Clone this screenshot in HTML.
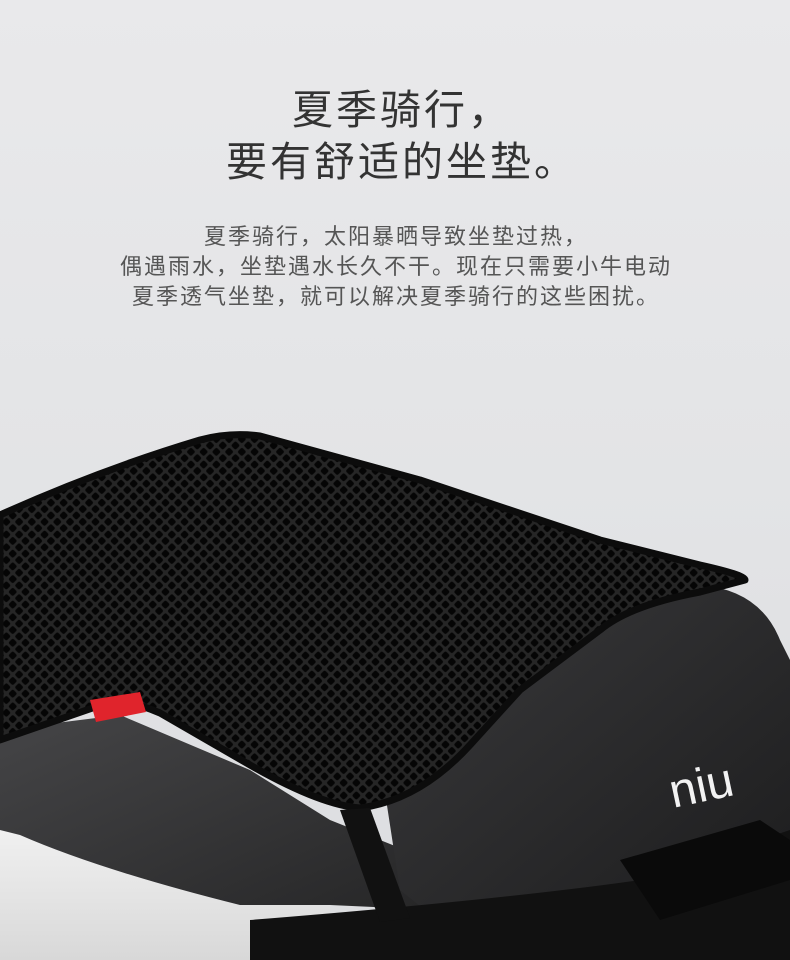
<!DOCTYPE html>
<html><head><meta charset="utf-8"><style>
html,body{margin:0;padding:0}
body{width:790px;height:960px;overflow:hidden;position:relative;background:linear-gradient(180deg,#e9e9eb 0%,#e3e4e6 50%,#dcdde0 100%);font-family:"Liberation Sans","Noto Sans CJK SC",sans-serif}
.t{position:absolute;left:0;width:790px;text-align:center;color:#333}
.h{font-size:41px;line-height:52px;top:84px;letter-spacing:3px;padding-left:14px;box-sizing:border-box}
.p{font-size:22px;line-height:30px;top:222px;color:#555;letter-spacing:2px;padding-left:2px;box-sizing:border-box}
svg{position:absolute;left:0;top:0}
</style></head><body>
<svg width="790" height="960" viewBox="0 0 790 960">
<defs>
<pattern id="m" width="9" height="9" patternUnits="userSpaceOnUse" patternTransform="rotate(45)">
<rect width="9" height="9" fill="#262626"/><rect x="1.3" y="1.3" width="6.4" height="6.4" rx="1.8" fill="#050505"/>
</pattern>
<linearGradient id="ls" x1="0" y1="0" x2="1" y2="1"><stop offset="0" stop-color="#454547"/><stop offset="1" stop-color="#262627"/></linearGradient>
<linearGradient id="rs" x1="0" y1="0" x2="1" y2="1"><stop offset="0" stop-color="#3a3a3c"/><stop offset="1" stop-color="#1c1c1d"/></linearGradient>
<linearGradient id="wh" x1="0" y1="0" x2="0" y2="1"><stop offset="0" stop-color="#f4f4f4"/><stop offset="1" stop-color="#d8d8d8"/></linearGradient>
</defs>
<path d="M0,810 L330,880 L330,960 L0,960Z" fill="url(#wh)"/>
<path d="M0,730 L120,715 L250,770 L330,820 L430,860 L440,910 L330,905 L240,905 Q100,870 20,835 L0,830Z" fill="url(#ls)"/>
<path d="M380,760 L500,690 L600,615 L700,585 Q760,590 780,640 L790,660 L790,880 L700,900 L600,930 L450,930 L400,890 Z" fill="url(#rs)"/>
<path d="M250,920 Q500,900 640,880 L790,830 L790,960 L250,960Z" fill="#111"/>
<path d="M620,860 L760,820 L790,840 L790,880 L660,920Z" fill="#0a0a0a"/>
<path d="M0,515 Q100,470 200,440 Q230,432 260,436 L420,480 L600,540 L700,565 Q745,575 745,580 L700,592 Q630,605 600,630 L520,690 L470,745 Q420,800 360,808 Q320,805 250,765 L160,713 Q130,700 110,702 L0,740Z" fill="url(#m)" stroke="#0c0c0c" stroke-width="7" stroke-linejoin="round"/>
<path d="M340,810 L370,808 L410,918 L380,922Z" fill="#111"/>
<path d="M90,700 L140,692 L146,712 L96,722Z" fill="#e0242c"/>
<text x="670" y="802" fill="#f2f2f2" font-size="48" font-family="Liberation Sans,sans-serif" transform="rotate(-12 700 790)">niu</text>
</svg>
<div class="t h">夏季骑行，<br>要有舒适的坐垫。</div>
<div class="t p">夏季骑行，太阳暴晒导致坐垫过热，<br>偶遇雨水，坐垫遇水长久不干。现在只需要小牛电动<br>夏季透气坐垫，就可以解决夏季骑行的这些困扰。</div>
</body></html>
